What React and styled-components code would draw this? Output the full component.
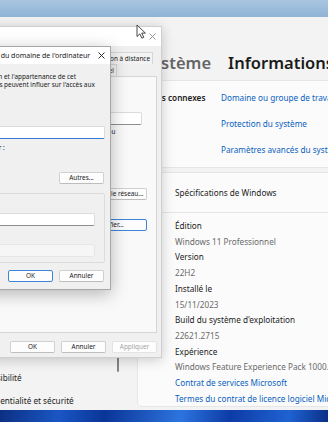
import React from "react"
import styled, { createGlobalStyle } from "styled-components"

const GlobalStyle = createGlobalStyle`
  *, *::before, *::after {
    box-sizing: border-box;
  }
  html, body {
    margin: 0;
    padding: 0;
  }
  body {
    font-family: "Noto Sans", "Open Sans", sans-serif;
    background: #0b3598;
  }
`

const Desktop = styled.div`
  position: relative;
  width: 328px;
  height: 422px;
  overflow: hidden;
  background:
    linear-gradient(180deg, #a9c5df 0%, #8fb4d6 100%) top / 100% 17px no-repeat,
    linear-gradient(97deg, #0c2f83 0%, #1a56c4 18%, #0a3597 32%, #2d74df 55%, #0d3ca6 70%, #1f62d2 88%, #0a2f86 100%) bottom / 100% 14px no-repeat,
    #dfe6ee;
`

/* ---------- Settings window (behind) ---------- */

const SettingsWindow = styled.div`
  position: absolute;
  left: -90px;
  top: 17px;
  width: 470px;
  height: 393px;
  background: #f3f3f3;
  display: flex;
  flex-direction: column;
  overflow: hidden;
`
const SettingsTitleBar = styled.div`
  flex: none;
  height: 24px;
`
const SettingsBody = styled.div`
  flex: 1;
  min-height: 0;
  display: grid;
  grid-template-columns: 227px 1fr;
`
const Nav = styled.nav`
  position: relative;
  display: flex;
  flex-direction: column;
  justify-content: flex-end;
`
const NavItem = styled.div`
  height: 23px;
  flex: none;
  display: flex;
  align-items: center;
  padding: 4px 0 0 65px;
  font-size: 8.2px;
  color: #1b1b1b;
  white-space: nowrap;
`
const NavScrollThumb = styled.div`
  position: absolute;
  right: 18px;
  top: 280px;
  width: 2px;
  height: 51px;
  border-radius: 1px;
  background: #868686;
`
const Content = styled.main`
  min-width: 0;
  display: flex;
  flex-direction: column;
  padding-top: 8px;
`
const Breadcrumb = styled.h1`
  margin: 0 0 5px;
  height: 26px;
  display: flex;
  align-items: center;
  gap: 8px;
  padding-left: 6px;
  font-size: 16.5px;
  font-weight: 600;
  color: #1b1b1b;
  white-space: nowrap;
  svg {
    margin-right: 1px;
  }
`
const Crumb = styled.span`
  color: ${p => (p.$current ? "#1b1b1b" : "#656565")};
`
const Card = styled.section`
  background: #fbfbfb;
  border: 1px solid #e6e6e6;
  border-radius: 4px;
  margin-right: 8px;
  font-size: 8.2px;
  white-space: nowrap;
`
const LinksCard = styled(Card)`
  display: grid;
  grid-template-columns: 76px 1fr;
  padding: 4px 0 4px 7px;
  margin-bottom: 4px;
`
const LinksLabel = styled.div`
  line-height: 26px;
  font-weight: 600;
  color: #1b1b1b;
`
const LinkList = styled.div`
  display: flex;
  flex-direction: column;
`
const SettingsLink = styled.a`
  line-height: ${p => p.$lh || 26}px;
  color: #0a5fbf;
  text-decoration: none;
`
const CardHeader = styled.div`
  height: 40px;
  display: flex;
  align-items: center;
  gap: 14px;
  padding-left: 10px;
  border-bottom: 1px solid #e6e6e6;
  color: #1b1b1b;
`
const CardBody = styled.div`
  display: flex;
  flex-direction: column;
  padding: 5px 0 0 37px;
`
const SpecLabel = styled.div`
  line-height: 15.7px;
  color: #1b1b1b;
`
const SpecValue = styled.div`
  line-height: 15.7px;
  color: #6a6a6a;
`

/* ---------- Classic dialogs ---------- */

const DialogFrame = styled.div`
  position: absolute;
  display: flex;
  flex-direction: column;
  background: #f0f0f0;
  font-size: 6.4px;
  color: #1a1a1a;
  white-space: nowrap;
`
const SysDialog = styled(DialogFrame)`
  left: -150px;
  top: 26px;
  width: 312px;
  height: 332px;
  border: 1px solid #cfcfcf;
  box-shadow: 0 2px 12px rgba(0, 0, 0, 0.2);
`
const NameDialog = styled(DialogFrame)`
  left: -105px;
  top: 46px;
  width: 216px;
  height: 244px;
  border: 1px solid #a8a8a8;
  box-shadow: 0 4px 16px rgba(0, 0, 0, 0.28);
`
const TitleBar = styled.div`
  flex: none;
  height: ${p => p.$h}px;
  display: flex;
  align-items: center;
  justify-content: space-between;
  padding: 0 5px 0 ${p => p.$pl || 8}px;
  background: #ffffff;
  color: ${p => (p.$active ? "#1a1a1a" : "#8a8a8a")};
  font-size: 7px;
`
const SysBody = styled.div`
  flex: 1;
  display: flex;
  flex-direction: column;
  padding: 6px 4px 0 6px;
`
const TabRow = styled.div`
  height: 12px;
  display: flex;
  justify-content: flex-end;
  padding-right: ${p => p.$inset}px;
`
const Tab = styled.div`
  height: 12px;
  padding: 0 2px 0 3px;
  margin-left: -1px;
  border: 1px solid #d6d6d6;
  border-bottom: none;
  background: ${p => (p.$selected ? "#f9f9f9" : "#f3f3f3")};
  line-height: 11px;
`
const TabPanel = styled.div`
  flex: none;
  height: 257px;
  display: flex;
  flex-direction: column;
  padding: 9px 9px 0 10px;
  background: #f9f9f9;
  border: 1px solid #d6d6d6;
`
const PanelIntro = styled.div`
  display: flex;
  gap: 13px;
  line-height: 8px;
`
const ComputerIcon = styled.div`
  flex: none;
  width: 24px;
  height: 18px;
  border: 2px solid #3d6fb6;
  border-radius: 1px;
  background: linear-gradient(180deg, #8fc3f2, #3b83d6);
`
const FieldRow = styled.div`
  display: flex;
  align-items: center;
  gap: 6px;
  margin-top: ${p => p.$mt || 0}px;
  height: ${p => p.$h || 8}px;
  padding-right: ${p => p.$pr || 0}px;
`
const FieldLabel = styled.div`
  flex: none;
  width: ${p => p.$w || 100}px;
  line-height: 8px;
`
const TextBox = styled.input`
  flex: 1;
  min-width: 0;
  height: 13px;
  margin: 0;
  padding: 0 3px;
  font: inherit;
  color: #1a1a1a;
  background: ${p => (p.disabled ? "#f6f6f6" : "#ffffff")};
  border: 1px solid ${p => (p.disabled ? "#e6e6e6" : "#dcdcdc")};
  border-bottom: ${p =>
    p.$focused ? "1.5px solid #2f7bd1" : p.disabled ? "1px solid #e6e6e6" : "1px solid #8e8e8e"};
  border-radius: 2px;
  outline: none;
`
const Note = styled.div`
  line-height: 8px;
  margin-top: ${p => p.$mt || 0}px;
  margin-left: ${p => p.$ml || 0}px;
`
const ActionRow = styled.div`
  height: 24px;
  display: flex;
  align-items: center;
  justify-content: space-between;
  gap: 8px;
  margin-top: ${p => p.$mt}px;
`
const ActionText = styled.div`
  width: 180px;
  line-height: 8px;
  white-space: normal;
`
const DlgButton = styled.button`
  flex: none;
  width: ${p => p.$w || 45}px;
  height: 12px;
  padding: 0;
  font-family: inherit;
  font-size: inherit;
  line-height: 1;
  white-space: nowrap;
  color: ${p => (p.disabled ? "#a6a6a6" : "#1a1a1a")};
  background: #fdfdfd;
  border: 1px solid ${p => (p.$primary ? "#3c86d8" : p.disabled ? "#e3e3e3" : "#d0d0d0")};
  border-bottom-color: ${p => (p.$primary ? "#3c86d8" : p.disabled ? "#e3e3e3" : "#bdbdbd")};
  border-radius: 2px;
`
const ButtonBar = styled.div`
  display: flex;
  justify-content: flex-end;
  gap: 6px;
  margin-top: ${p => p.$mt}px;
  padding-right: ${p => p.$pr || 0}px;
`
const NameBody = styled.div`
  flex: 1;
  display: flex;
  flex-direction: column;
  padding: 9px 5px 0 19px;
`
const Paragraph = styled.div`
  line-height: 7.8px;
`
const GroupBox = styled.div`
  height: 70px;
  margin-top: 9px;
  display: flex;
  flex-direction: column;
  padding: 0 9px 0 10px;
  border: 1px solid #dcdcdc;
  border-radius: 2px;
`
const Legend = styled.div`
  align-self: flex-start;
  margin: -4px 0 0 -4px;
  padding: 0 2px;
  line-height: 8px;
  background: #f0f0f0;
`
const Radio = styled.label`
  display: flex;
  align-items: center;
  gap: 4px;
  line-height: 8px;
  margin-top: ${p => p.$mt}px;
  &::before {
    content: "";
    width: 6px;
    height: 6px;
    border-radius: 50%;
    border: 1px solid #6a6a6a;
    background: ${p => (p.$checked ? "radial-gradient(circle, #1a1a1a 1.3px, #fff 1.6px)" : "#fff")};
  }
`
const Cursor = styled.svg`
  position: absolute;
  left: 136px;
  top: 24px;
`

function CloseGlyph({ color }) {
  return (
    <svg width="7" height="7" viewBox="0 0 7 7">
      <path d="M0.5 0.5 L6.5 6.5 M6.5 0.5 L0.5 6.5" stroke={color} strokeWidth="0.9" />
    </svg>
  )
}

function Chevron() {
  return (
    <svg width="5" height="9" viewBox="0 0 5 9">
      <path d="M1 1 L4 4.5 L1 8" stroke="#6a6a6a" strokeWidth="1.1" fill="none" />
    </svg>
  )
}

function WindowsLogo() {
  return (
    <svg width="13" height="13" viewBox="0 0 13 13">
      <rect x="0" y="0" width="6" height="6" fill="#0a78d4" />
      <rect x="7" y="0" width="6" height="6" fill="#0a78d4" />
      <rect x="0" y="7" width="6" height="6" fill="#0a78d4" />
      <rect x="7" y="7" width="6" height="6" fill="#0a78d4" />
    </svg>
  )
}

const navItems = [
  "Système",
  "Bluetooth et appareils",
  "Réseau et Internet",
  "Personnalisation",
  "Applications",
  "Comptes",
  "Heure et langue",
  "Jeux",
  "Accessibilité",
  "Confidentialité et sécurité",
]

const specs = [
  ["Édition", "Windows 11 Professionnel"],
  ["Version", "22H2"],
  ["Installé le", "15/11/2023"],
  ["Build du système d'exploitation", "22621.2715"],
  ["Expérience", "Windows Feature Experience Pack 1000.22677.1000.0"],
]

function Settings() {
  return (
    <SettingsWindow>
      <SettingsTitleBar />
      <SettingsBody>
        <Nav>
          {navItems.map(item => (
            <NavItem key={item}>{item}</NavItem>
          ))}
          <NavScrollThumb />
        </Nav>
        <Content>
          <Breadcrumb>
            <Crumb>Système</Crumb>
            <Chevron />
            <Crumb $current>Informations système</Crumb>
          </Breadcrumb>
          <LinksCard>
            <LinksLabel>Liens connexes</LinksLabel>
            <LinkList>
              <SettingsLink>Domaine ou groupe de travail</SettingsLink>
              <SettingsLink>Protection du système</SettingsLink>
              <SettingsLink>Paramètres avancés du système</SettingsLink>
            </LinkList>
          </LinksCard>
          <Card>
            <CardHeader>
              <WindowsLogo />
              Spécifications de Windows
            </CardHeader>
            <CardBody>
              {specs.map(([label, value]) => (
                <React.Fragment key={label}>
                  <SpecLabel>{label}</SpecLabel>
                  <SpecValue>{value}</SpecValue>
                </React.Fragment>
              ))}
              <SettingsLink $lh={15.7}>Contrat de services Microsoft</SettingsLink>
              <SettingsLink $lh={15.7}>Termes du contrat de licence logiciel Microsoft</SettingsLink>
            </CardBody>
          </Card>
        </Content>
      </SettingsBody>
    </SettingsWindow>
  )
}

function SystemProperties() {
  return (
    <SysDialog>
      <TitleBar $h={19}>
        <span>Propriétés système</span>
        <CloseGlyph color="#8a8a8a" />
      </TitleBar>
      <SysBody>
        <TabRow $inset={4}>
          <Tab>Paramètres système avancés</Tab>
          <Tab>Protection du système</Tab>
          <Tab>Utilisation à distance</Tab>
        </TabRow>
        <TabRow $inset={40}>
          <Tab $selected>Nom de l'ordinateur</Tab>
          <Tab>Matériel</Tab>
        </TabRow>
        <TabPanel>
          <PanelIntro>
            <ComputerIcon />
            <div>
              Windows utilise les informations suivantes pour identifier votre
              <br />
              ordinateur sur le réseau.
            </div>
          </PanelIntro>
          <FieldRow $mt={8} $h={12} $pr={5}>
            <FieldLabel $w={108}>Description de l'ordinateur :</FieldLabel>
            <TextBox readOnly value="" />
          </FieldRow>
          <Note $mt={4} $ml={114}>
            Par exemple : « Ordinateur de la cuisine » ou
            <br />
            « Ordinateur de Marie ».
          </Note>
          <FieldRow $mt={7}>
            <FieldLabel $w={108}>Nom complet de l'ordinateur :</FieldLabel>
            <span>DESKTOP-4KQ8F2M</span>
          </FieldRow>
          <FieldRow $mt={2}>
            <FieldLabel $w={108}>Groupe de travail :</FieldLabel>
            <span>WORKGROUP</span>
          </FieldRow>
          <ActionRow $mt={12.9}>
            <ActionText>Pour utiliser un Assistant pour joindre un domaine ou un groupe de travail, cliquez sur Identité sur le réseau.</ActionText>
            <DlgButton $w={76}>Identité sur le réseau...</DlgButton>
          </ActionRow>
          <ActionRow $mt={7.5}>
            <ActionText>Pour renommer cet ordinateur ou modifier son domaine ou son groupe de travail, cliquez sur Modifier.</ActionText>
            <DlgButton $w={76} $primary>Modifier...</DlgButton>
          </ActionRow>
        </TabPanel>
        <ButtonBar $mt={8}>
          <DlgButton>OK</DlgButton>
          <DlgButton>Annuler</DlgButton>
          <DlgButton disabled>Appliquer</DlgButton>
        </ButtonBar>
      </SysBody>
    </SysDialog>
  )
}

function ComputerNameChanges() {
  return (
    <NameDialog>
      <TitleBar $h={17} $pl={24} $active>
        <span>Modification du nom ou du domaine de l'ordinateur</span>
        <CloseGlyph color="#1a1a1a" />
      </TitleBar>
      <NameBody>
        <Paragraph>
          Vous pouvez modifier le nom et l'appartenance de cet
          <br />
          ordinateur. Ces modifications peuvent influer sur l'accès aux
          <br />
          ressources réseau.
        </Paragraph>
        <Note $mt={12}>Nom de l'ordinateur :</Note>
        <FieldRow $mt={9.8} $h={13}>
          <TextBox readOnly value="DESKTOP-4KQ8F2M" $focused />
        </FieldRow>
        <Note $mt={5}>Nom complet de l'ordinateur :</Note>
        <Note>DESKTOP-4KQ8F2M</Note>
        <ButtonBar $mt={12.2} $pr={1}>
          <DlgButton>Autres...</DlgButton>
        </ButtonBar>
        <GroupBox>
          <Legend>Membre d'un</Legend>
          <Radio $mt={4}>Domaine :</Radio>
          <FieldRow $mt={3} $h={13}>
            <TextBox readOnly value="" />
          </FieldRow>
          <Radio $mt={5} $checked>Groupe de travail :</Radio>
          <FieldRow $mt={5} $h={13}>
            <TextBox readOnly disabled value="" />
          </FieldRow>
        </GroupBox>
        <ButtonBar $mt={7} $pr={1}>
          <DlgButton $primary>OK</DlgButton>
          <DlgButton>Annuler</DlgButton>
        </ButtonBar>
      </NameBody>
    </NameDialog>
  )
}

export default function App() {
  return (
    <>
      <GlobalStyle />
      <Desktop>
        <Settings />
        <SystemProperties />
        <ComputerNameChanges />
        <Cursor width="11" height="15" viewBox="0 0 11 15">
          <path
            d="M1 1 L1 12.5 L3.8 9.9 L5.9 14.2 L7.8 13.3 L5.7 9.1 L9.4 9.1 Z"
            fill="#ffffff"
            stroke="#1a1a1a"
            strokeWidth="0.8"
            strokeLinejoin="round"
          />
        </Cursor>
      </Desktop>
    </>
  )
}
